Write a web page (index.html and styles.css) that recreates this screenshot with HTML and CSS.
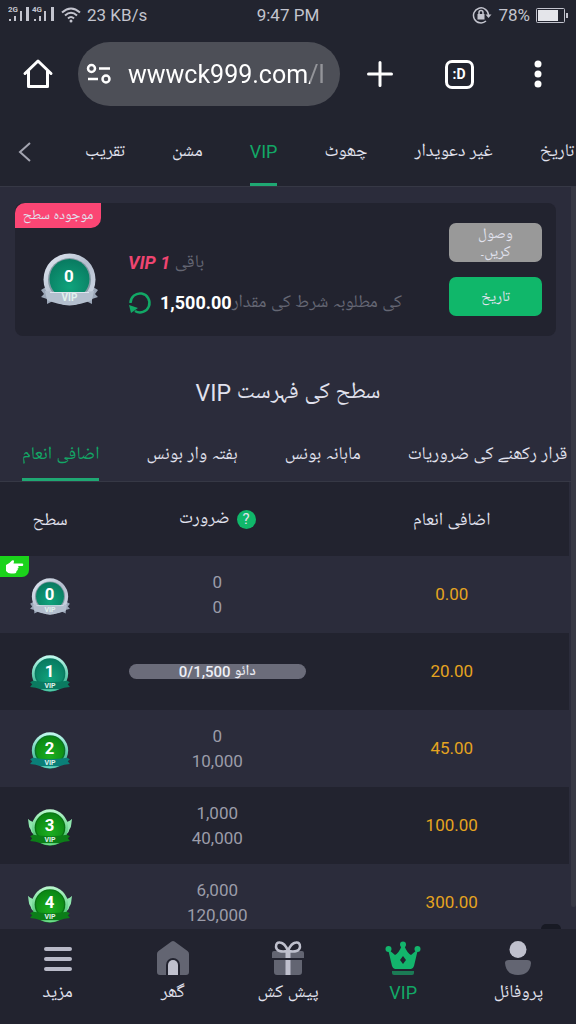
FILE: index.html
```
<!DOCTYPE html>
<html lang="ur">
  <head>
    <meta charset="UTF-8" />
    <meta name="viewport" content="width=device-width, initial-scale=1.0" />
    <title>VIP</title>
    <link rel="stylesheet" href="styles.css">
  </head>
  <body>
    <!-- shared badge artwork -->
    <svg class="sprite" aria-hidden="true">
      <defs>
        <linearGradient id="silver" x1="0" y1="0" x2="1" y2="1">
          <stop offset="0" stop-color="#e6ecf6" />
          <stop offset="0.5" stop-color="#b4bece" />
          <stop offset="1" stop-color="#d3dbe8" />
        </linearGradient>
        <linearGradient id="mint" x1="0" y1="0" x2="0" y2="1">
          <stop offset="0" stop-color="#c4fbf0" />
          <stop offset="0.6" stop-color="#5cc9ab" />
          <stop offset="1" stop-color="#1b9a78" />
        </linearGradient>
        <linearGradient id="lime" x1="0" y1="0" x2="0" y2="1">
          <stop offset="0" stop-color="#bdf8d0" />
          <stop offset="0.6" stop-color="#66d48b" />
          <stop offset="1" stop-color="#1c9c35" />
        </linearGradient>
        <radialGradient id="face-teal" cx="0.5" cy="0.7" r="0.7">
          <stop offset="0" stop-color="#10a37c" />
          <stop offset="1" stop-color="#087a60" />
        </radialGradient>
        <radialGradient id="face-green" cx="0.5" cy="0.7" r="0.7">
          <stop offset="0" stop-color="#1cae20" />
          <stop offset="1" stop-color="#0a8512" />
        </radialGradient>
      </defs>
      <symbol id="badge-silver" viewBox="-3 0 63 53">
        <path d="M5 34 L0 37 L3 41 L0 44 L6 46 L6 51 L14 47 L43 47 L51 51 L51 46 L57 44 L54 41 L57 37 L52 34 Z" fill="#9ba6b7" />
        <circle cx="28.5" cy="26.5" r="26" fill="url(#silver)" />
        <circle cx="28.5" cy="26.5" r="21.5" fill="#8499a3" />
        <circle cx="28.5" cy="26" r="20" fill="url(#face-teal)" />
        <path d="M4 38 Q28.5 41 53 38 L51 47 Q28.5 57 6 47 Z" fill="#b4bfce" />
        <path d="M9 39.5 H48" stroke="#dde4ee" stroke-width="1" />
      </symbol>
      <symbol id="badge-teal" viewBox="-3 0 63 53">
        <circle cx="28.5" cy="26.5" r="26" fill="url(#mint)" />
        <circle cx="28.5" cy="26.5" r="22" fill="#087a60" />
        <circle cx="28.5" cy="26" r="20" fill="url(#face-teal)" />
        <path d="M4 37 L0 39 L3 42 L0 46 L8 47 L15 49 H42 L49 47 L57 46 L54 42 L57 39 L53 37 Q28.5 41 4 37 Z" fill="#0b7a60" />
        <path d="M15 49 Q28.5 55 42 49 Z" fill="#54c9a8" />
      </symbol>
      <symbol id="badge-mint" viewBox="-3 0 63 53">
        <circle cx="28.5" cy="26.5" r="26" fill="url(#mint)" />
        <circle cx="28.5" cy="26.5" r="22" fill="#0a7328" />
        <circle cx="28.5" cy="26" r="20" fill="url(#face-green)" />
        <path d="M4 37 L0 39 L3 42 L0 46 L8 47 L15 49 H42 L49 47 L57 46 L54 42 L57 39 L53 37 Q28.5 41 4 37 Z" fill="#0a7f78" />
        <path d="M15 49 Q28.5 55 42 49 Z" fill="#68d6c4" />
      </symbol>
      <symbol id="badge-lime" viewBox="-3 0 63 53">
        <path d="M-3 14 Q0 18 7 19 L9 37 Q2 36 1 30 Q-2 27 -2 22 Z M60 14 Q57 18 50 19 L48 37 Q55 36 56 30 Q59 27 59 22 Z" fill="#8fe6ae" />
        <circle cx="28.5" cy="26.5" r="26" fill="url(#lime)" />
        <circle cx="28.5" cy="26.5" r="22" fill="#0a7314" />
        <circle cx="28.5" cy="26" r="20" fill="url(#face-green)" />
        <path d="M4 37 L0 39 L3 42 L0 46 L8 47 L15 49 H42 L49 47 L57 46 L54 42 L57 39 L53 37 Q28.5 41 4 37 Z" fill="#0c7d18" />
        <path d="M15 49 Q28.5 55 42 49 Z" fill="#6fdc8c" />
      </symbol>
    </svg>

    <div class="app">
      <!-- phone status bar -->
      <div class="status-bar">
        <div class="status-left">
          <svg width="47" height="18" viewBox="0 0 47 18" fill="#c3c4ce">
            <text x="0" y="6" class="net-label">2G</text>
            <path d="M1 13h2v2h-2z M6 10h2v5h-2z M12 5h2v10h-2z M18 1h3v14h-3z" />
            <text x="24" y="6" class="net-label">4G</text>
            <path d="M26 13h2v2h-2z M31 10h2v5h-2z M36 5h2v10h-2z M43 1h3v14h-3z" />
          </svg>
          <svg width="20" height="16" viewBox="0 0 20 16" fill="none" stroke="#c3c4ce" stroke-width="2">
            <path d="M1 5.5Q10 -2.5 19 5.5M4 8.5Q10 3 16 8.5M7 11.5Q10 8.5 13 11.5" />
            <circle cx="10" cy="14" r="1.5" fill="#c3c4ce" stroke="none" />
          </svg>
          <span>23 KB/s</span>
        </div>
        <span>9:47 PM</span>
        <div class="status-right">
          <svg width="20" height="18" viewBox="0 0 20 18" fill="none" stroke="#c3c4ce" stroke-width="1.5">
            <path d="M14 15A7.5 7.5 0 1 1 16.5 9" />
            <path d="M13.5 8.5h6l-3 3.5z" fill="#c3c4ce" stroke="none" />
            <rect x="5.5" y="8" width="7" height="5.5" fill="#c3c4ce" stroke="none" />
            <path d="M7 8V6.5a2 2 0 0 1 4 0V8" />
          </svg>
          <span>78%</span>
          <svg width="32" height="15" viewBox="0 0 32 15">
            <rect x="0.5" y="0.5" width="28" height="14" rx="1" fill="none" stroke="#c3c4ce" />
            <rect x="2" y="2" width="20" height="11" fill="#e4e5ea" />
            <rect x="30" y="5" width="2" height="5" fill="#c3c4ce" />
          </svg>
        </div>
      </div>

      <!-- browser toolbar -->
      <header class="browser-bar">
        <button class="icon-btn" type="button" aria-label="Home">
          <svg width="32" height="32" viewBox="0 0 32 32" fill="none" stroke="#fff" stroke-width="3" stroke-linejoin="round" stroke-linecap="round">
            <path d="M3 15.5L16 3L29 15.5M6.5 13V28.5H25.5V13" />
          </svg>
        </button>
        <div class="address">
          <svg width="26" height="22" viewBox="0 0 26 22" fill="none" stroke="#fff" stroke-width="2.5">
            <circle cx="5.5" cy="5.5" r="3.5" />
            <path d="M13 5.5H24M2 16H12" />
            <circle cx="20" cy="16" r="3.5" />
          </svg>
          <input class="address-input" type="text" aria-label="URL" value="wwwck999.com/l" />
        </div>
        <div class="browser-actions">
          <button class="icon-btn" type="button" aria-label="New tab">
            <svg width="28" height="28" viewBox="0 0 28 28" stroke="#fff" stroke-width="3" stroke-linecap="round">
              <path d="M14 2.5V25.5M2.5 14H25.5" />
            </svg>
          </button>
          <button class="icon-btn" type="button" aria-label="Tabs"><span class="tab-count">:D</span></button>
          <button class="icon-btn" type="button" aria-label="Menu">
            <svg width="8" height="28" viewBox="0 0 8 28" fill="#fff">
              <circle cx="4" cy="4" r="3.5" />
              <circle cx="4" cy="14" r="3.5" />
              <circle cx="4" cy="24" r="3.5" />
            </svg>
          </button>
        </div>
      </header>

      <nav class="top-tabs">
        <button class="back" type="button" aria-label="Back">
          <svg width="14" height="20" viewBox="0 0 14 20" fill="none" stroke="#a3a4b0" stroke-width="2">
            <path d="M12 1L2 10L12 19" />
          </svg>
        </button>
        <a class="tab" href="#">تقریب</a>
        <a class="tab" href="#">مشن</a>
        <a class="tab active" href="#">VIP</a>
        <a class="tab" href="#">چھوٹ</a>
        <a class="tab" href="#">غیر دعویدار</a>
        <a class="tab" href="#">تاریخ</a>
      </nav>

      <main class="content">
        <section class="level-card">
          <span class="current-level">موجودہ سطح</span>
          <svg class="badge" viewBox="-3 0 63 53">
            <use href="#badge-silver" x="-3" y="0" width="63" height="53" />
            <text class="badge-num" x="28" y="29">0</text>
            <text class="badge-vip" x="28.5" y="48">VIP</text>
          </svg>
          <div class="level-info">
            <p><b class="next-level">VIP 1</b> باقی</p>
            <p class="amount-row">
              <svg width="24" height="24" viewBox="0 0 24 24" fill="none" stroke="#12a866" stroke-width="2.5">
                <path d="M2.5 12A9.5 9.5 0 1 1 7 20" />
                <path d="M1 14L10 17L3 22Z" fill="#12a866" stroke="none" />
              </svg>
              <span><b class="amount">1,500.00</b>کی مطلوبہ شرط کی مقدار</span>
            </p>
          </div>
          <div class="level-actions">
            <button class="btn btn-claim" type="button">وصول کریں۔</button>
            <button class="btn btn-history" type="button">تاریخ</button>
          </div>
        </section>

        <h1 class="title">VIP سطح کی فہرست</h1>

        <nav class="bonus-tabs">
          <a class="tab active" href="#">اضافی انعام</a>
          <a class="tab" href="#">ہفتہ وار بونس</a>
          <a class="tab" href="#">ماہانہ بونس</a>
          <a class="tab" href="#">قرار رکھنے کی ضروریات</a>
        </nav>

        <table class="levels">
          <thead>
            <tr>
              <th class="col-level"><span class="th-text">سطح</span></th>
              <th>
                <span class="th-help"><span class="th-text">ضرورت</span><button class="help" type="button">?</button></span>
              </th>
              <th><span class="th-text">اضافی انعام</span></th>
            </tr>
          </thead>
          <tbody>
            <tr>
              <td class="level-cell">
                <span class="pointer">
                  <svg width="18" height="14" viewBox="0 0 18 14" fill="#fff">
                    <path d="M0 5Q3 4 6 0.5Q8 -0.5 8 1.5L7.5 3.5H16.5Q18 4.5 16.5 6H12Q13.5 8 11.5 8.5Q12.5 10 10.5 11Q10.5 13.5 8 13.5H5Q2 13.5 0 11Z" />
                  </svg>
                </span>
                <svg class="badge" viewBox="-3 0 63 53">
                  <use href="#badge-silver" x="-3" y="0" width="63" height="53" />
                  <text class="badge-num" x="28" y="31">0</text>
                  <text class="badge-vip" x="28.5" y="48">VIP</text>
                </svg>
              </td>
              <td>0<br />0</td>
              <td class="reward">0.00</td>
            </tr>
            <tr>
              <td class="level-cell">
                <svg class="badge" viewBox="-3 0 63 53">
                  <use href="#badge-teal" x="-3" y="0" width="63" height="53" />
                  <text class="badge-num" x="28" y="31">1</text>
                  <text class="badge-vip" x="28.5" y="47">VIP</text>
                </svg>
              </td>
              <td><div class="progress">0/1,500 دائو</div></td>
              <td class="reward">20.00</td>
            </tr>
            <tr>
              <td class="level-cell">
                <svg class="badge" viewBox="-3 0 63 53">
                  <use href="#badge-mint" x="-3" y="0" width="63" height="53" />
                  <text class="badge-num" x="28" y="31">2</text>
                  <text class="badge-vip" x="28.5" y="47">VIP</text>
                </svg>
              </td>
              <td>0<br />10,000</td>
              <td class="reward">45.00</td>
            </tr>
            <tr>
              <td class="level-cell">
                <svg class="badge" viewBox="-3 0 63 53">
                  <use href="#badge-lime" x="-3" y="0" width="63" height="53" />
                  <text class="badge-num" x="28" y="31">3</text>
                  <text class="badge-vip" x="28.5" y="47">VIP</text>
                </svg>
              </td>
              <td>1,000<br />40,000</td>
              <td class="reward">100.00</td>
            </tr>
            <tr>
              <td class="level-cell">
                <svg class="badge" viewBox="-3 0 63 53">
                  <use href="#badge-lime" x="-3" y="0" width="63" height="53" />
                  <text class="badge-num" x="28" y="31">4</text>
                  <text class="badge-vip" x="28.5" y="47">VIP</text>
                </svg>
              </td>
              <td>6,000<br />120,000</td>
              <td class="reward">300.00</td>
            </tr>
          </tbody>
        </table>
        <span class="scroll-thumb"></span>
        <span class="float-edge"></span>
      </main>

      <nav class="bottom-nav">
        <a class="nav-item" href="#">
          <svg width="36" height="36" viewBox="0 0 36 36" stroke="#b9bac8" stroke-width="4" stroke-linecap="round">
            <path d="M6 8H30M6 18H30M6 28H30" />
          </svg>
          <span>مزید</span>
        </a>
        <a class="nav-item" href="#">
          <svg width="36" height="36" viewBox="0 0 36 36">
            <path d="M16.5 0.5Q18 -0.5 19.5 0.5L32.5 10Q34 11 34 13V31Q34 34 31 34H5Q2 34 2 31V13Q2 11 3.5 10Z" fill="#636572" />
            <path d="M11 34V24a7 7 0 0 1 14 0V34Z" fill="#22232f" />
            <path d="M13 34V24a5 5 0 0 1 10 0V34Z" fill="#bfc0cd" />
          </svg>
          <span>گھر</span>
        </a>
        <a class="nav-item" href="#">
          <svg width="36" height="36" viewBox="0 0 36 36">
            <path d="M4 10H32Q34 10 34 12V17H2V12Q2 10 4 10Z M4 19H32V31Q32 34 29 34H7Q4 34 4 31Z" fill="#636572" />
            <path d="M15.5 10H20.5V17H15.5Z M15.5 19H20.5V34H15.5Z" fill="#bfc0cd" />
            <path d="M18 10Q7 12 6 6Q6 1 10 1.5Q15 2 18 10Q21 2 26 1.5Q30 1 30 6Q29 12 18 10Z" fill="none" stroke="#bfc0cd" stroke-width="2.5" />
          </svg>
          <span>پیش کش</span>
        </a>
        <a class="nav-item active" href="#">
          <svg width="36" height="36" viewBox="0 0 36 36" fill="#13b56c">
            <path d="M3 8L10 14Q14 12 17 4H19Q22 12 26 14L33 8L29 25Q28 28 26 28H10Q8 28 7 25Z" />
            <circle cx="3.5" cy="8" r="3" />
            <circle cx="18" cy="3.5" r="3" />
            <circle cx="32.5" cy="8" r="3" />
            <path d="M18 15L21 19L18 23L15 19Z" fill="#22232f" />
            <path d="M7 30H29V32Q29 34 27 34H9Q7 34 7 32Z" fill="#1b7b55" />
          </svg>
          <span>VIP</span>
        </a>
        <a class="nav-item" href="#">
          <svg width="36" height="36" viewBox="0 0 36 36">
            <circle cx="18" cy="8.5" r="8.5" fill="#bfc0cd" />
            <path d="M9 19H27Q31 19 31 22Q30 34 18 34Q6 34 5 22Q5 19 9 19Z" fill="#636572" />
          </svg>
          <span>پروفائل</span>
        </a>
      </nav>
    </div>
  </body>
</html>
```

FILE: styles.css
```
* {
  box-sizing: border-box;
}

body {
  margin: 0;
  background: #22242f;
  color: #e1e2ee;
  font-family: Roboto, "Noto Naskh Arabic UI", "Noto Naskh Arabic", serif;
  font-size: 18px;
}

a {
  color: inherit;
  text-decoration: none;
}

button {
  font-family: inherit;
  color: inherit;
  background: none;
  border: 0;
  padding: 0;
  cursor: pointer;
}

svg {
  display: block;
  flex-shrink: 0;
}

.sprite {
  position: absolute;
  width: 0;
  height: 0;
}

.app {
  display: flex;
  flex-direction: column;
  height: 100vh;
  overflow: hidden;
}

/* status bar */
.status-bar {
  display: grid;
  grid-template-columns: 1fr auto 1fr;
  align-items: center;
  height: 30px;
  padding: 0 8px;
  color: #c3c4ce;
  font-size: 17px;
}

.status-left,
.status-right {
  display: flex;
  align-items: center;
  gap: 6px;
}

.status-right {
  justify-content: flex-end;
}

.net-label {
  font-size: 8px;
  font-weight: bold;
}

/* browser toolbar */
.browser-bar {
  display: flex;
  align-items: center;
  gap: 18px;
  height: 88px;
  padding: 0 16px;
}

.icon-btn {
  display: flex;
  align-items: center;
  justify-content: center;
  width: 44px;
  height: 44px;
}

.address {
  display: flex;
  flex: 1;
  align-items: center;
  gap: 16px;
  min-width: 0;
  height: 64px;
  padding: 0 10px 0 8px;
  border-radius: 32px;
  background: #4d4f57;
}

.address-input {
  flex: 1;
  min-width: 0;
  padding: 0;
  border: 0;
  outline: 0;
  background: none;
  color: #fff;
  font-family: inherit;
  font-size: 25px;
  -webkit-mask-image: linear-gradient(to right, #000 182px, rgba(0, 0, 0, 0.4) 182px);
  mask-image: linear-gradient(to right, #000 182px, rgba(0, 0, 0, 0.4) 182px);
}

.browser-actions {
  display: flex;
  gap: 35px;
}

.tab-count {
  width: 29px;
  height: 29px;
  border: 3px solid #fff;
  border-radius: 7px;
  color: #fff;
  font-size: 14px;
  font-weight: bold;
  line-height: 22px;
}

/* tabs */
.top-tabs,
.bonus-tabs {
  display: flex;
  flex-shrink: 0;
  gap: 47px;
  overflow: hidden;
  border-bottom: 1px solid #363845;
  white-space: nowrap;
}

.top-tabs {
  height: 69px;
  padding-left: 18px;
}

.back {
  margin-right: 6px;
}

.tab {
  flex-shrink: 0;
  border-bottom: 3px solid transparent;
  line-height: 68px;
}

.top-tabs .tab {
  height: 68px;
}

.tab.active {
  border-color: #1fa873;
  color: #12a866;
}

/* page */
.content {
  position: relative;
  flex: 1;
  min-height: 0;
  overflow: hidden;
  background: #2b2c3b;
}

.level-card {
  position: relative;
  display: flex;
  align-items: flex-start;
  margin: 16px 20px 0 15px;
  padding: 20px 14px 20px 23px;
  border-radius: 8px;
  background: #22232f;
}

.current-level {
  position: absolute;
  top: 0;
  left: 0;
  width: 86px;
  height: 25px;
  border-radius: 10px 0;
  background: #fb4674;
  font-size: 14px;
  line-height: 27px;
  text-align: center;
}

.level-card .badge {
  width: 63px;
  height: 53px;
  margin-top: 30px;
}

.badge-num {
  fill: #fff;
  font-size: 17px;
  font-weight: bold;
  text-anchor: middle;
}

.levels .badge-num {
  font-size: 24px;
}

.badge-vip {
  fill: #e0f2ee;
  font-size: 10px;
  font-weight: bold;
  text-anchor: middle;
}

.level-info {
  flex: 1;
  margin: 20px 0 -7px;
  padding-left: 27px;
  color: #656774;
}

.level-info p {
  margin: 0;
  line-height: 40px;
  white-space: nowrap;
}

.next-level {
  color: #ef4571;
  font-style: italic;
}

.amount-row {
  display: flex;
  align-items: center;
  gap: 8px;
}

.amount {
  color: #fff;
}

.level-actions {
  display: flex;
  flex-direction: column;
  gap: 15px;
}

.btn {
  width: 93px;
  height: 39px;
  padding: 2px 24px 0;
  border-radius: 7px;
  font-size: 15px;
  line-height: 18px;
}

.btn-claim {
  background: #999;
}

.btn-history {
  background: #10b76a;
}

.title {
  margin: 42px 0 19px;
  font-size: 23px;
  font-weight: normal;
  line-height: 32px;
  text-align: center;
}

.bonus-tabs {
  padding-left: 22px;
}

.bonus-tabs .tab {
  height: 52px;
  line-height: 51px;
}

/* level table */
.levels {
  width: calc(100% - 7px);
  border-collapse: collapse;
  table-layout: fixed;
  background: #22232f;
  color: #9b9ca9;
  font-size: 17px;
  line-height: 25px;
  text-align: center;
}

.levels th {
  height: 74px;
  padding: 0;
  color: #e1e2ee;
  font-size: 18px;
  font-weight: normal;
}

.levels .col-level {
  width: 100px;
}

.levels td {
  height: 77px;
  padding: 0;
}

.levels tbody tr:nth-child(odd) {
  background: #2b2c3b;
}

.th-text {
  display: inline-block;
  overflow: hidden;
  line-height: 22px;
  vertical-align: middle;
}

.th-help {
  display: flex;
  align-items: center;
  justify-content: center;
  gap: 7px;
}

.help {
  width: 19px;
  height: 19px;
  border-radius: 50%;
  background: #10b76a;
  font-size: 15px;
  line-height: 19px;
}

.level-cell {
  position: relative;
}

.levels .badge {
  width: 44px;
  height: 37px;
  margin: 4px auto 0;
}

.pointer {
  position: absolute;
  top: 0;
  left: 0;
  display: flex;
  align-items: center;
  justify-content: center;
  width: 29px;
  height: 21px;
  border-radius: 0 0 7px 0;
  background: #1bd31b;
}

.levels .reward {
  color: #e5a420;
}

.progress {
  width: 177px;
  height: 15px;
  margin: 0 auto;
  border-radius: 8px;
  background: #6b6c7a;
  color: #eeeff6;
  font-size: 15px;
  font-weight: 500;
  line-height: 16px;
}

.scroll-thumb {
  position: absolute;
  top: 0;
  right: 0;
  width: 5px;
  height: 97%;
  border-radius: 0 0 3px 3px;
  background: #373844;
}

.float-edge {
  position: absolute;
  right: 15px;
  bottom: 0;
  width: 20px;
  height: 5px;
  border-radius: 6px 6px 0 0;
  background: #181a24;
}

/* bottom navigation */
.bottom-nav {
  display: flex;
  flex-shrink: 0;
  height: 95px;
  padding-top: 12px;
  background: #22232f;
}

.nav-item {
  display: flex;
  flex: 1;
  flex-direction: column;
  align-items: center;
  gap: 4px;
  line-height: 24px;
}

.nav-item.active {
  color: #12a866;
}
```
